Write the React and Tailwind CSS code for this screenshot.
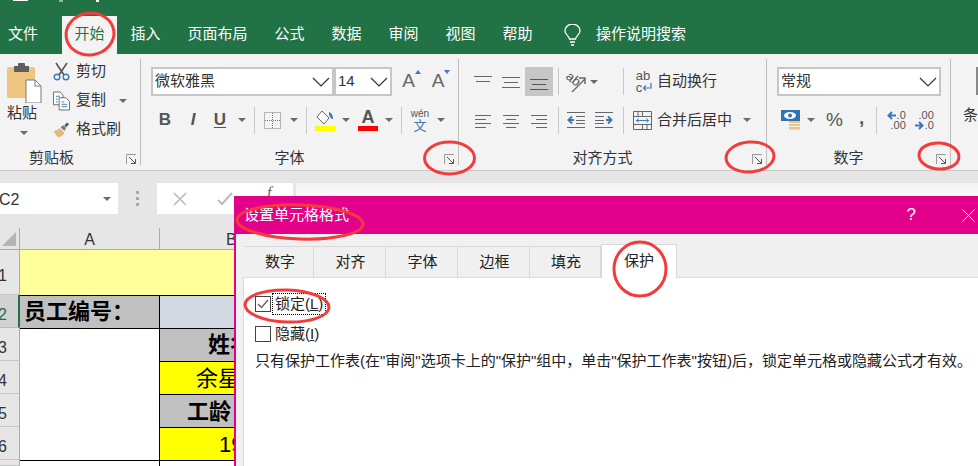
const tabs = ["插入", "页面布局", "公式", "数据", "审阅", "视图", "帮助"];
const dialogTabs = [
  { label: "数字", w: "w-[69px]" },
  { label: "对齐", w: "w-[72px]" },
  { label: "字体", w: "w-[72px]" },
  { label: "边框", w: "w-[72px]" },
  { label: "填充", w: "w-[71px]" },
];
const annotations = [
  [90, 34, 24, 21, -8],
  [449.5, 158, 25, 16, 0],
  [750, 157, 24, 15, -4],
  [939, 156, 20, 13, 4],
  [300, 222, 63, 17, 2],
  [640, 269, 26, 27, 0],
  [287, 306, 42, 16, 2],
];

function Caret({ className = "" }) {
  return <span className={`inline-block h-0 w-0 border-x-[4px] border-t-[4px] border-x-transparent border-t-[#6a6a6a] ${className}`} />;
}

function Sep({ className = "" }) {
  return <span className={`block h-[27px] w-px bg-[#c8c8c8] ${className}`} />;
}

function Cell({ w, children }) {
  return <span className={`flex h-full shrink-0 items-center justify-center ${w}`}>{children}</span>;
}

function Launcher() {
  return (
    <svg width="11" height="11" viewBox="0 0 11 11" fill="none" className="translate-y-[1px]">
      <path d="M.5 10V.5H10" stroke="#9a9a9a" />
      <path d="M3 3l6 6M5 9.5h4.5V5" stroke="#555" />
    </svg>
  );
}

function GroupLabel({ children, className = "" }) {
  return (
    <div className="flex h-[22px] items-center text-[#333]">
      <span className={`flex-1 text-center ${className}`}>{children}</span>
      <span className="flex w-[20px] justify-end pr-[3px]"><Launcher /></span>
    </div>
  );
}

function Divider() {
  return <span className="my-[5px] w-px shrink-0 bg-[#bdbdbd]" />;
}

function Chevron() {
  return (
    <svg width="18" height="10" viewBox="0 0 18 10" fill="none">
      <path d="M1 1l8 8 8-8" stroke="#333" strokeWidth="1.2" />
    </svg>
  );
}

function Combo({ w, children }) {
  return (
    <div className={`flex h-[29px] shrink-0 items-center justify-between border-2 border-[#c6c6c6] bg-white pl-[2px] pr-[2px] text-[#333] ${w}`}>
      <span>{children}</span>
      <Chevron />
    </div>
  );
}

function Lines({ rows, tone = "#666", w = 18 }) {
  return (
    <svg width={w} height="16" viewBox={`0 0 ${w} 16`} fill="none" stroke={tone}>
      {rows.map(([x1, x2, y]) => <path key={y} d={`M${x1} ${y}.5H${x2}`} />)}
    </svg>
  );
}

function PasteIcon() {
  return (
    <svg width="36" height="40" viewBox="0 0 36 40">
      <rect x="0" y="4" width="28" height="31" rx="2" fill="#edc57f" />
      <path d="M7 3h4V1a1 1 0 011-1h5a1 1 0 011 1v2h4v6H7z" fill="#5f5f5f" />
      <path d="M19 17h9l6 6v17H19z" fill="#fff" stroke="#7b7b7b" />
      <path d="M28 17v6h6" fill="none" stroke="#7b7b7b" />
    </svg>
  );
}

function ScissorsIcon() {
  return (
    <svg width="17" height="19" viewBox="0 0 17 19" fill="none">
      <path d="M3 1l8 12M14 1L6 13" stroke="#555" strokeWidth="1.6" />
      <circle cx="4" cy="15" r="2.8" stroke="#3f78b5" strokeWidth="1.4" />
      <circle cx="13" cy="15" r="2.8" stroke="#3f78b5" strokeWidth="1.4" />
    </svg>
  );
}

function CopyIcon() {
  return (
    <svg width="18" height="20" viewBox="0 0 18 20" fill="none">
      <path d="M.5.5h7l3 3V14H.5z" fill="#fff" stroke="#666" />
      <path d="M6.5 6.5h7l4 4v9h-11z" fill="#fff" stroke="#666" />
      <path d="M3 5h4M3 8h2M3 11h2M9 11h3M9 13.5h6M9 16h6" stroke="#3f78b5" />
    </svg>
  );
}

function BrushIcon() {
  return (
    <svg width="18" height="16" viewBox="0 0 18 16">
      <path d="M1 9c3 0 5-2 6-3l5 5c-1 2-3 4-6 5-2-1-4-4-5-7z" fill="#e3b778" />
      <path d="M8 5l3-2 3 3-2 3z" fill="#7a7a7a" />
      <path d="M12 3l3-3 2 2-3 3z" fill="#555" />
    </svg>
  );
}

function FillIcon() {
  return (
    <span className="flex flex-col items-center">
      <svg width="20" height="16" viewBox="0 0 20 16" fill="none">
        <path d="M7 1l7 7-5 6-7-7z" fill="#fff" stroke="#666" />
        <path d="M14 2c3 1 4 4 4 7-2 0-3-2-4-4z" fill="#3f78b5" />
      </svg>
      <span className="h-[5px] w-[20px] bg-[#ffff00]" />
    </span>
  );
}

function BorderIcon() {
  return (
    <svg width="17" height="17" viewBox="0 0 17 17" fill="none" stroke="#777" strokeDasharray="1 1">
      <path d="M.5.5h16v16H.5zM8.5 1v15M1 8.5h15" />
    </svg>
  );
}

function GrowA({ dir }) {
  return (
    <span className="relative flex items-center text-[19px] text-[#666]">
      A
      <span className={`absolute -right-[6px] top-[3px] h-0 w-0 border-x-[3px] border-x-transparent ${dir === "up" ? "border-b-[4px] border-b-[#3f78b5]" : "border-t-[4px] border-t-[#3f78b5]"}`} />
    </span>
  );
}

function OrientIcon() {
  return (
    <svg width="22" height="24" viewBox="0 0 22 24" fill="none">
      <text x="0" y="12" fontSize="13" fill="#555" transform="rotate(40 6 10)">ab</text>
      <path d="M7 22L20 9M14 8h6v6" stroke="#666" strokeWidth="1.4" />
    </svg>
  );
}

function WrapIcon() {
  return (
    <span className="flex flex-col text-[13px] leading-[12px] text-[#555]">
      <span>ab</span>
      <span className="flex items-center">
        c
        <svg width="10" height="9" viewBox="0 0 10 9" fill="none" stroke="#3f78b5" strokeWidth="1.2">
          <path d="M9 0v5H2M4 2.5L1.5 5 4 7.5" />
        </svg>
      </span>
    </span>
  );
}

function MergeIcon() {
  return (
    <svg width="19" height="19" viewBox="0 0 19 19" fill="none">
      <path d="M.5.5h18v18H.5zM1 5.5h17M1 13.5h17M9.5 1v4M9.5 14v4M5 1v4M14 14v4" stroke="#666" />
      <path d="M3 9.5h13M5.5 7.5l-2 2 2 2M13.5 7.5l2 2-2 2" stroke="#3f78b5" />
    </svg>
  );
}

function IndentIcon({ flip }) {
  return (
    <svg width="18" height="16" viewBox="0 0 18 16" fill="none" className={flip ? "-scale-x-100" : ""}>
      <path d="M0 .5h18M9 4.5h9M9 8.5h9M9 11.5h9M0 15.5h18" stroke="#666" />
      <path d="M7 8H2M5 4.5L1.5 8 5 11.5" stroke="#3f78b5" strokeWidth="2" />
    </svg>
  );
}

function MoneyIcon() {
  return (
    <svg width="20" height="20" viewBox="0 0 20 20">
      <rect x="0" y="0" width="19" height="11" fill="#2f73b5" />
      <ellipse cx="9" cy="5.5" rx="6" ry="3.5" fill="#fff" />
      <circle cx="9" cy="5.5" r="2" fill="#2f73b5" />
      <path d="M8 11h11v2H8zM8 14h11v2H8zM8 17h11v2.5H8z" fill="#edc57f" />
    </svg>
  );
}

function DecimalIcon({ top, bottom, left }) {
  const arrow = (
    <svg width="9" height="9" viewBox="0 0 9 9" fill="none" stroke="#3f78b5" strokeWidth="2" className={left ? "" : "-scale-x-100"}>
      <path d="M9 4.5H2M5 1L1.5 4.5 5 8" />
    </svg>
  );
  return (
    <span className="flex flex-col items-end text-[11px] leading-[10px] text-[#555]">
      <span className="flex h-[10px] items-center gap-[1px]">{left && arrow}{top}</span>
      <span className="flex h-[10px] items-center gap-[1px]">{!left && arrow}{bottom}</span>
    </span>
  );
}

function Ribbon() {
  return (
    <div className="flex h-[116px] shrink-0 bg-[#f3f3f3] text-[15px] text-[#333]">
      <section className="flex w-[140px] shrink-0 flex-col">
        <div className="flex h-[93px]">
          <div className="flex w-[46px] flex-col items-center pt-[9px] pl-[4px]">
            <PasteIcon />
            <span className="w-[30px] -translate-x-[3px] leading-[20px]">粘贴</span>
            <Caret className="mt-[8px] -translate-x-[1px]" />
          </div>
          <div className="flex flex-col pt-[2px]">
            <div className="flex h-[30px] items-center pl-[7px]"><Cell w="w-[17px]"><ScissorsIcon /></Cell><span className="ml-[6px]">剪切</span></div>
            <div className="flex h-[29px] items-center pl-[7px]"><Cell w="w-[17px]"><CopyIcon /></Cell><span className="ml-[6px]">复制</span><Caret className="ml-[13px]" /></div>
            <div className="flex h-[29px] items-center pl-[7px]"><Cell w="w-[17px]"><BrushIcon /></Cell><span className="ml-[6px]">格式刷</span></div>
          </div>
        </div>
        <GroupLabel className="pr-[17px]">剪贴板</GroupLabel>
      </section>
      <Divider />

      <section className="flex w-[317px] shrink-0 flex-col">
        <div className="h-[93px] pt-[13px]">
          <div className="ml-[10px] flex h-[29px] items-center">
            <Combo w="w-[183px]">微软雅黑</Combo>
            <Combo w="w-[58px]">14</Combo>
            <Cell w="w-[33px]"><GrowA dir="up" /></Cell>
            <Cell w="w-[26px]"><GrowA dir="down" /></Cell>
          </div>
          <div className="ml-[10px] mt-[9px] flex h-[30px] items-center text-[#555]">
            <Cell w="w-[28px]"><b className="text-[17px]">B</b></Cell>
            <Cell w="w-[28px]"><i className="text-[17px] font-bold">I</i></Cell>
            <Cell w="w-[26px]"><b className="text-[17px] underline underline-offset-2">U</b></Cell>
            <Cell w="w-[18px]"><Caret /></Cell>
            <Cell w="w-[6px]"><Sep /></Cell>
            <Cell w="w-[30px]"><BorderIcon /></Cell>
            <Cell w="w-[14px]"><Caret /></Cell>
            <Cell w="w-[10px]"><Sep /></Cell>
            <Cell w="w-[28px]"><FillIcon /></Cell>
            <Cell w="w-[14px]"><Caret /></Cell>
            <Cell w="w-[30px]">
              <span className="flex flex-col items-center">
                <b className="text-[18px] leading-[17px]">A</b>
                <span className="h-[5px] w-[20px] bg-[#ff0000]" />
              </span>
            </Cell>
            <Cell w="w-[12px]"><Caret /></Cell>
            <Cell w="w-[12px]"><Sep /></Cell>
            <Cell w="w-[26px]">
              <span className="flex flex-col items-center leading-none">
                <span className="text-[10px]">wén</span>
                <span className="text-[13px] text-[#3f78b5]">文</span>
              </span>
            </Cell>
            <Cell w="w-[16px]"><Caret /></Cell>
          </div>
        </div>
        <GroupLabel>字体</GroupLabel>
      </section>
      <Divider />

      <section className="flex w-[307px] shrink-0 flex-col">
        <div className="h-[93px] pt-[13px]">
          <div className="ml-[10px] flex h-[29px] items-center">
            <Cell w="w-[28px]"><Lines rows={[[0, 18, 2], [2, 16, 7]]} /></Cell>
            <Cell w="w-[28px]"><Lines rows={[[0, 18, 3], [2, 16, 8], [0, 18, 13]]} /></Cell>
            <Cell w="w-[28px]">
              <span className="flex h-full w-full items-center justify-center bg-[#c6c6c6]"><Lines rows={[[0, 18, 5], [2, 16, 10], [0, 18, 15]]} tone="#555" /></span>
            </Cell>
            <Cell w="w-[10px]"><Sep /></Cell>
            <Cell w="w-[26px]"><OrientIcon /></Cell>
            <Cell w="w-[10px]"><Caret /></Cell>
            <span className="w-[20px]" />
            <Cell w="w-[8px]"><Sep /></Cell>
            <span className="ml-[8px]"><Cell w="w-[18px]"><WrapIcon /></Cell></span>
            <span className="ml-[4px]">自动换行</span>
          </div>
          <div className="ml-[10px] mt-[9px] flex h-[30px] items-center">
            <Cell w="w-[28px]"><Lines w={16} rows={[[0, 16, 3], [0, 11, 7], [0, 16, 11], [0, 11, 15]]} /></Cell>
            <Cell w="w-[28px]"><Lines w={16} rows={[[0, 16, 3], [3, 13, 7], [0, 16, 11], [3, 13, 15]]} /></Cell>
            <Cell w="w-[28px]"><Lines w={16} rows={[[0, 16, 3], [5, 16, 7], [0, 16, 11], [5, 16, 15]]} /></Cell>
            <Cell w="w-[10px]"><Sep /></Cell>
            <Cell w="w-[26px]"><IndentIcon /></Cell>
            <Cell w="w-[30px]"><IndentIcon flip /></Cell>
            <Cell w="w-[8px]"><Sep /></Cell>
            <span className="ml-[6px]"><Cell w="w-[19px]"><MergeIcon /></Cell></span>
            <span className="ml-[5px]">合并后居中</span>
            <Caret className="ml-[11px]" />
          </div>
        </div>
        <GroupLabel>对齐方式</GroupLabel>
      </section>
      <Divider />

      <section className="flex w-[183px] shrink-0 flex-col">
        <div className="h-[93px] pt-[13px]">
          <div className="ml-[10px] flex h-[29px] items-center">
            <Combo w="w-[164px]">常规</Combo>
          </div>
          <div className="mt-[9px] flex h-[30px] items-center pl-[14px] text-[#555]">
            <Cell w="w-[20px]"><MoneyIcon /></Cell>
            <Caret className="ml-[6px]" />
            <span className="ml-[11px] text-[19px]">%</span>
            <b className="ml-[16px] -translate-y-[2px] text-[19px]">,</b>
            <Cell w="w-[24px]"><Sep /></Cell>
            <Cell w="w-[16px]"><DecimalIcon left top=".0" bottom=".00" /></Cell>
            <span className="ml-[12px]"><Cell w="w-[16px]"><DecimalIcon top=".00" bottom=".0" /></Cell></span>
          </div>
        </div>
        <GroupLabel>数字</GroupLabel>
      </section>
      <Divider />

      <section className="min-w-0 flex-1 overflow-hidden pl-[12px]">
        <div className="flex h-[46px] justify-end pt-[13px]"><span className="h-[28px] w-[2px] border border-[#888]" /></div>
        <div className="mt-[4px]">条</div>
      </section>
    </div>
  );
}

function FormulaBar() {
  return (
    <div className="flex h-[58px] shrink-0 border-t border-[#c8c8c8] bg-[#e6e6e6] pt-[12px] text-[16px]">
      <div className="flex h-[31px] w-[118px] items-center justify-between bg-white pr-[7px] text-[#333]">
        <span className="-ml-[1px] translate-y-[1px]">C2</span>
        <Caret />
      </div>
      <div className="flex h-[31px] w-[39px] flex-col items-center justify-center gap-[3px]">
        <span className="h-[3px] w-[3px] bg-[#aaa]" />
        <span className="h-[3px] w-[3px] bg-[#aaa]" />
        <span className="h-[3px] w-[3px] bg-[#aaa]" />
      </div>
      <div className="flex h-[31px] w-[136px] items-center bg-white text-[#bbb]">
        <Cell w="w-[45px]">
          <svg width="14" height="14" viewBox="0 0 14 14" fill="none" stroke="#bbb" strokeWidth="1.6"><path d="M1 1l12 12M13 1L1 13" /></svg>
        </Cell>
        <Cell w="w-[45px]">
          <svg width="16" height="14" viewBox="0 0 16 14" fill="none" stroke="#bbb" strokeWidth="2"><path d="M1 8l4 4L15 1" /></svg>
        </Cell>
        <span className="ml-[20px] -translate-y-[6px] font-['Liberation_Serif',serif] text-[#666] italic">f</span>
      </div>
      <div className="ml-[3px] h-[31px] flex-1 bg-gradient-to-b from-[#f4f4f4] to-white" />
    </div>
  );
}

function RowHead({ n, active }) {
  return (
    <div className={`flex items-center border-b text-[16px] ${n ? "pt-[8px]" : ""} ${active ? "border-r-2 border-r-[#217346] border-b-[#bbb] bg-[#d2d2d2] text-[#217346]" : "border-r border-r-[#ababab] border-b-[#c6c6c6] bg-[#e6e6e6] text-[#333]"}`}>
      <span className="-ml-[2px]">{n}</span>
    </div>
  );
}

function Sheet() {
  return (
    <div className="grid min-h-0 flex-1 grid-cols-[20px_140px_1fr] grid-rows-[22px_45px_33px_33px_33px_33px_33px_6px] overflow-hidden bg-white text-[22px] leading-[28px] text-black">
      <div className="flex items-end justify-end border-r border-b border-[#ababab] bg-[#e6e6e6] pr-[3px] pb-[3px]">
        <svg width="14" height="14" viewBox="0 0 14 14"><path d="M14 0v14H0z" fill="#b4b4b4" /></svg>
      </div>
      <div className="flex items-center justify-center border-r border-b border-[#ababab] bg-[#e6e6e6] pt-[2px] text-[16px] text-[#333]">A</div>
      <div className="flex items-center border-b border-[#ababab] bg-[#e6e6e6] pt-[2px] pl-[66px] text-[16px] text-[#333]">B</div>

      <RowHead n="1" />
      <div className="col-span-2 bg-[#ffff99]" />

      <RowHead n="2" active />
      <div className="flex items-center border-t border-r border-black bg-[#c0c0c0] pl-[4px] font-bold">员工编号：</div>
      <div className="border-t border-black bg-[#d3d9e2]" />

      <RowHead n="3" />
      <div className="row-span-4 border-t border-r border-black bg-white" />
      <div className="flex items-center border-t border-black bg-[#c0c0c0] pl-[48px] font-bold">姓名</div>

      <RowHead n="4" />
      <div className="flex items-center border-t border-black bg-[#ffff00] pt-[2px] pl-[36px]">余星</div>

      <RowHead n="5" />
      <div className="flex items-center border-t border-black bg-[#c0c0c0] pt-[1px] pl-[27px] font-bold">工龄</div>

      <RowHead n="6" />
      <div className="flex items-center border-t border-black bg-[#ffff00] pt-[1px] pl-[59px]">19</div>

      <RowHead n="" />
      <div className="border-t border-r border-black" />
      <div className="border-t border-black" />
    </div>
  );
}

function CheckRow({ checked, focus, children }) {
  return (
    <div className="flex h-[22px] items-center">
      <span className="flex h-[16px] w-[16px] shrink-0 items-center justify-center border border-[#444] bg-white">
        {checked && (
          <svg width="12" height="10" viewBox="0 0 12 10" fill="none" stroke="#666" strokeWidth="1.5"><path d="M1 5l3.5 3.5L11 1" /></svg>
        )}
      </span>
      <span className={`ml-[2px] px-[2px] leading-[20px] ${focus ? "outline-1 outline-dotted outline-black" : ""}`}>{children}</span>
    </div>
  );
}

function FormatDialog() {
  return (
    <div className="absolute top-[196px] right-0 bottom-0 left-[234px] flex flex-col border-l-2 border-[#e3008b] bg-[#f0f0f0] text-[15px] text-[#222]">
      <div className="flex h-[38px] shrink-0 items-center bg-[#e3008b] pl-[8px] text-white">
        <span className="flex-1">设置单元格格式</span>
        <span className="mr-[46px] text-[17px]">?</span>
        <svg width="13" height="13" viewBox="0 0 13 13" fill="none" stroke="#fff" className="mr-[3px]"><path d="M.5.5l12 12M12.5.5l-12 12" /></svg>
      </div>
      <div className="mt-[10px] ml-[9px] flex h-[33px] shrink-0 items-end">
        {dialogTabs.map((t) => (
          <span key={t.label} className={`flex h-[31px] items-center justify-center border-t border-r border-[#d9d9d9] pl-[2px] ${t.w}`}>{t.label}</span>
        ))}
        <span className="relative z-10 -mb-px flex h-[34px] w-[76px] items-center justify-center border-x border-t border-[#d9d9d9] bg-white">保护</span>
      </div>
      <div className="ml-[7px] flex-1 border-t border-l border-[#d9d9d9] bg-white pt-[15px] pl-[11px]">
        <CheckRow checked focus>锁定(<span className="underline">L</span>)</CheckRow>
        <div className="mt-[8px]">
          <CheckRow>隐藏(<span className="underline">I</span>)</CheckRow>
        </div>
        <p className="mt-[5px] leading-[22px] whitespace-nowrap">只有保护工作表(在"审阅"选项卡上的"保护"组中，单击"保护工作表"按钮)后，锁定单元格或隐藏公式才有效。</p>
      </div>
    </div>
  );
}

export default function App() {
  return (
    <div className="relative flex h-[466px] w-[978px] flex-col overflow-hidden bg-white font-['Liberation_Sans','Noto_Sans_CJK_SC',sans-serif] text-[15px]">
      <div className="flex h-[16px] shrink-0 items-start bg-[#217346]">
        <span className="ml-[13px] h-px w-[15px] bg-white" />
        <span className="ml-[31px] h-[2px] w-[4px] bg-[#8fb8a1]" />
        <span className="ml-[33px] h-[2px] w-[3px] bg-white" />
      </div>
      <div className="flex h-[38px] shrink-0 items-center bg-[#217346] text-white">
        <span className="w-[62px] pb-[2px] pl-[8px]">文件</span>
        <span className="flex h-full w-[55px] items-center justify-center bg-[#f3f3f3] pb-[2px] text-[#217346]">开始</span>
        {tabs.map((t) => <span key={t} className="px-[13.5px] pb-[2px]">{t}</span>)}
        <svg width="17" height="22" viewBox="0 0 17 22" fill="none" stroke="#fff" strokeWidth="1.3" className="ml-[18px]">
          <path d="M5.5 15c0-3-4.5-4-4.5-8a7.5 7 0 0115 0c0 4-4.5 5-4.5 8zM6 18h5M7 21h3" />
        </svg>
        <span className="ml-[15px] pb-[2px]">操作说明搜索</span>
      </div>
      <Ribbon />
      <FormulaBar />
      <Sheet />
      <FormatDialog />
      <svg className="pointer-events-none absolute inset-0 z-20" width="978" height="466" fill="none" stroke="#f23c3c" strokeWidth="3">
        {annotations.map(([cx, cy, rx, ry, rot]) => (
          <ellipse key={cx} cx={cx} cy={cy} rx={rx} ry={ry} transform={`rotate(${rot} ${cx} ${cy})`} />
        ))}
      </svg>
    </div>
  );
}
